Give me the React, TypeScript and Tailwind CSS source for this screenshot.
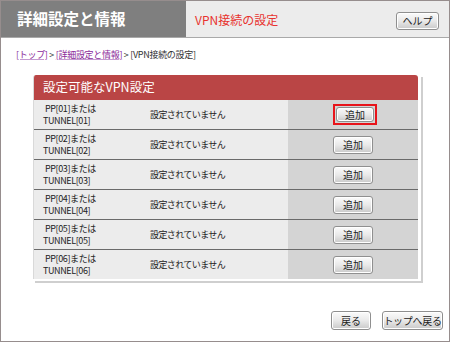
const FONT = "font-['Noto_Sans_CJK_JP','Noto_Sans',sans-serif]";

const rows = ["01", "02", "03", "04", "05", "06"];

function GrayButton({
  children,
  className = "",
}: {
  children: React.ReactNode;
  className?: string;
}) {
  return (
    <button
      className={`flex items-center justify-center whitespace-nowrap rounded-[3px] border border-[#8f8f8f] bg-gradient-to-b from-[#fbfbfb] via-[#e9e9e9] to-[#c9c9c9] text-[10px] leading-none text-[#222] shadow-[inset_0_0_0_1px_#ffffff] ${className}`}
    >
      {children}
    </button>
  );
}

export default function App() {
  return (
    <div className={`${FONT} w-[451px] h-[343px] bg-white`}>
      <div className="w-[450px] h-[342px] border border-[#968d8d] flex flex-col">
        {/* header */}
        <div className="flex h-[37px] border-b border-[#a9a9a9]">
          <div className="w-[185px] bg-[#7f7f7f] flex items-center pl-[16px]">
            <span className="text-white font-bold text-[15.5px]">
              詳細設定と情報
            </span>
          </div>
          <div className="flex-1 bg-[#ececec] flex items-center justify-between pl-[9px] pr-[10px]">
            <span className="text-[#e8332f] text-[12px] pt-[1px]">VPN接続の設定</span>
            <GrayButton className="w-[43px] h-[18px] mt-[3px]">ヘルプ</GrayButton>
          </div>
        </div>

        {/* breadcrumb */}
        <div className="pl-[15px] pt-[12px] text-[9px] tracking-[-0.3px] text-[#333] leading-none">
          <span className="text-[#8a2a9a] underline decoration-[#c49ad0]">[トップ]</span>
          <span> &gt; </span>
          <span className="text-[#8a2a9a] underline decoration-[#c49ad0]">[詳細設定と情報]</span>
          <span> &gt; [VPN接続の設定]</span>
        </div>

        {/* panel */}
        <div className="pl-[32px] pt-[16px]">
          <div className="w-[388px] pr-[3px] pb-[2px] shadow-[2px_2px_0_0_#cfcfcf]">
            <div className="w-[385px] rounded-t-[3px] border-l border-[#d9d9d9] overflow-hidden">
              <div className="h-[25px] bg-[#ba4545] flex items-center pl-[9px]">
                <span className="text-white text-[12.5px]">設定可能なVPN設定</span>
              </div>
              {rows.map((n, i) => (
                <div
                  key={n}
                  className={`flex ${i > 0 ? "h-[30px] border-t border-[#6a6a6a]" : "h-[29px]"}`}
                >
                  <div className="w-[254px] bg-[#ececec] flex items-center">
                    <div className="w-[116px] pl-[9px] text-[9px] tracking-[-0.4px] leading-[12px] text-[#222]">
                      <div className="pl-[2px]">PP[{n}]または</div>
                      <div>TUNNEL[{n}]</div>
                    </div>
                    <span className="text-[9px] tracking-[-0.6px] text-[#222]">設定されていません</span>
                  </div>
                  <div className="flex-1 bg-[#d4d4d4] flex items-center pl-[45px]">
                    {i === 0 ? (
                      <div className="border-2 border-[#e8141b] p-[1px]">
                        <GrayButton className="w-[38px] h-[15px]">追加</GrayButton>
                      </div>
                    ) : (
                      <GrayButton className="w-[40px] h-[18px] mt-[1px]">追加</GrayButton>
                    )}
                  </div>
                </div>
              ))}
            </div>
          </div>
        </div>

        {/* footer buttons */}
        <div className="flex justify-end gap-[11px] pr-[6px] pt-[30px]">
          <GrayButton className="w-[40px] h-[19px]">戻る</GrayButton>
          <GrayButton className="w-[61px] h-[19px] text-[9.5px] tracking-[-0.3px]">トップへ戻る</GrayButton>
        </div>
      </div>
    </div>
  );
}
